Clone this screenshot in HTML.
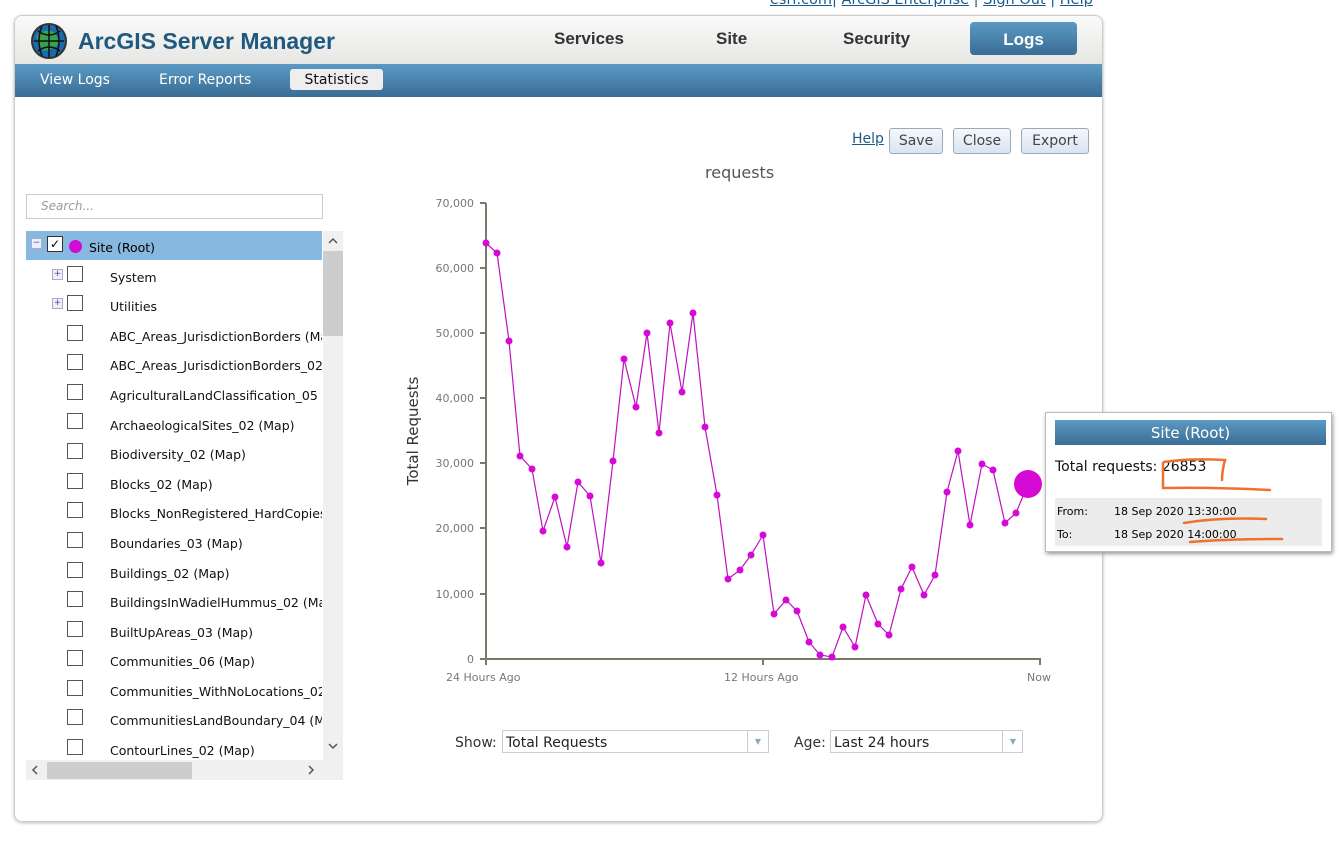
<!DOCTYPE html>
<html><head><meta charset="utf-8"><style>
body{margin:0;width:1342px;height:847px;background:#fff;font-family:"DejaVu Sans","Liberation Sans",sans-serif;position:relative;overflow:hidden}
.abs{position:absolute}
.toplinks{position:absolute;left:770px;top:-8px;font-size:14.5px;color:#1a5a8a}
.toplinks a{color:#1a5a8a;text-decoration:underline}
.frame{position:absolute;left:14px;top:15px;width:1087px;height:805px;border:1px solid #ccc;border-radius:8px;box-shadow:0 1px 3px #bbb;overflow:hidden}
.hdr{height:48px;background:linear-gradient(#fafafa,#e6e6e3)}
.sub{height:33px;background:linear-gradient(#5b9ac4,#3a6d94)}
.nav{position:absolute;top:29px;font-weight:bold;font-size:17px;color:#333;font-family:"Liberation Sans",sans-serif}
.btn{position:absolute;top:128px;height:24px;border:1px solid #9ab;border-radius:3px;background:linear-gradient(#f4f8fc,#d7e5f2);font-size:14px;color:#444;text-align:center;line-height:24px}
.row{position:absolute;left:110px;font-size:12.5px;color:#111;white-space:nowrap}
.cb{position:absolute;left:67px;width:14px;height:14px;border:1px solid #555;background:#fff}
.yl{position:absolute;font-size:11px;color:#777;text-align:right;width:50px;left:424px}
</style></head><body>
<div class="toplinks"><a>esri.com</a>| <a>ArcGIS Enterprise</a> | <a>Sign Out</a> | <a>Help</a></div>
<div class="frame">
<div class="hdr"></div><div class="sub"></div>
</div>
<svg class="abs" style="left:30px;top:22px" width="38" height="38" viewBox="0 0 38 38"><circle cx="19" cy="19" r="17" fill="#1a6ab0" stroke="#333" stroke-width="2"/><path d="M6 14 Q14 6 24 10 L30 20 Q22 30 12 28Z" fill="#3aa04a"/><path d="M4 19h30M19 3v32M8 9q11 8 22 0M8 29q11-8 22 0M12 4q-6 15 0 30M26 4q6 15 0 30" stroke="#111" stroke-width="1.5" fill="none"/></svg>
<div class="abs" style="left:78px;top:28px;font-size:23px;font-weight:bold;color:#1f5a7e;font-family:'Liberation Sans',sans-serif">ArcGIS Server Manager</div>
<div class="nav" style="left:554px">Services</div>
<div class="nav" style="left:716px">Site</div>
<div class="nav" style="left:843px">Security</div>
<div class="abs" style="left:970px;top:22px;width:107px;height:33px;border-radius:4px;background:linear-gradient(#5b9ac4,#3a6d94);color:#fff;font-weight:bold;font-size:17px;text-align:center;line-height:35px;font-family:'Liberation Sans',sans-serif">Logs</div>
<div class="abs" style="left:40px;top:72px;color:#fff;font-size:14px">View Logs</div>
<div class="abs" style="left:159px;top:72px;color:#fff;font-size:14px">Error Reports</div>
<div class="abs" style="left:290px;top:69px;width:93px;height:21px;background:#eee;border-radius:3px;font-size:14px;text-align:center;line-height:23px;color:#111">Statistics</div>
<div class="abs" style="left:852px;top:131px;font-size:14px;color:#1a5a8a;text-decoration:underline">Help</div>
<div class="btn" style="left:889px;width:52px">Save</div>
<div class="btn" style="left:953px;width:56px">Close</div>
<div class="btn" style="left:1021px;width:66px">Export</div>
<div class="abs" style="left:26px;top:194px;height:23px;border:1px solid #ccc;font-size:12px;color:#999;font-style:italic;line-height:23px;padding-left:14px;width:281px">Search...</div>
<div class="abs" style="left:26px;top:231px;width:317px;height:549px;background:#fff;overflow:hidden">
<div class="abs" style="left:0;top:0;width:296px;height:29px;background:#86b8e0"></div>
<div class="abs" style="left:297px;top:0;width:20px;height:549px;background:#f0f0f0"></div>
<div class="abs" style="left:297px;top:20px;width:20px;height:85px;background:#cdcdcd"></div>
<div class="abs" style="left:0;top:529px;width:297px;height:20px;background:#f0f0f0"></div>
<div class="abs" style="left:21px;top:531px;width:145px;height:17px;background:#cdcdcd"></div>
<svg class="abs" style="left:301px;top:5px" width="12" height="10"><path d="M2 7l4-4 4 4" stroke="#555" stroke-width="1.5" fill="none"/></svg>
<svg class="abs" style="left:301px;top:510px" width="12" height="10"><path d="M2 3l4 4 4-4" stroke="#555" stroke-width="1.5" fill="none"/></svg>
<svg class="abs" style="left:4px;top:533px" width="10" height="12"><path d="M7 2l-4 4 4 4" stroke="#555" stroke-width="1.5" fill="none"/></svg>
<svg class="abs" style="left:280px;top:533px" width="10" height="12"><path d="M3 2l4 4-4 4" stroke="#555" stroke-width="1.5" fill="none"/></svg>
</div>
<div class="abs" style="left:31px;top:238px;width:9px;height:9px;border:1px solid #aac;background:#eef;font-size:9px;line-height:8px;text-align:center;color:#557">−</div>
<div class="abs" style="left:47px;top:236px;width:14px;height:14px;border:1px solid #333;background:#fff;font-size:12px;line-height:14px;text-align:center">✓</div>
<div class="abs" style="left:69px;top:240px;width:13px;height:13px;border-radius:50%;background:#d60ad6"></div>
<div class="abs" style="left:89px;top:240px;font-size:12.5px">Site (Root)</div>
<div class="abs" style="left:52px;top:269px;width:9px;height:9px;border:1px solid #aac;background:#eef;font-size:9px;line-height:9px;text-align:center;color:#557">+</div>
<div class="abs" style="left:52px;top:298px;width:9px;height:9px;border:1px solid #aac;background:#eef;font-size:9px;line-height:9px;text-align:center;color:#557">+</div>
<div class="cb" style="top:266px"></div><div class="row" style="top:270px">System</div>
<div class="cb" style="top:295px"></div><div class="row" style="top:299px">Utilities</div>
<div class="cb" style="top:325px"></div><div class="row" style="top:329px;width:212px;overflow:hidden">ABC_Areas_JurisdictionBorders (Map)</div>
<div class="cb" style="top:354px"></div><div class="row" style="top:358px;width:212px;overflow:hidden">ABC_Areas_JurisdictionBorders_02</div>
<div class="cb" style="top:384px"></div><div class="row" style="top:388px;width:212px;overflow:hidden">AgriculturalLandClassification_05</div>
<div class="cb" style="top:413px"></div><div class="row" style="top:418px">ArchaeologicalSites_02 (Map)</div>
<div class="cb" style="top:443px"></div><div class="row" style="top:447px">Biodiversity_02 (Map)</div>
<div class="cb" style="top:473px"></div><div class="row" style="top:477px">Blocks_02 (Map)</div>
<div class="cb" style="top:502px"></div><div class="row" style="top:506px;width:212px;overflow:hidden">Blocks_NonRegistered_HardCopies</div>
<div class="cb" style="top:532px"></div><div class="row" style="top:536px">Boundaries_03 (Map)</div>
<div class="cb" style="top:562px"></div><div class="row" style="top:566px">Buildings_02 (Map)</div>
<div class="cb" style="top:591px"></div><div class="row" style="top:595px;width:212px;overflow:hidden">BuildingsInWadielHummus_02 (Map)</div>
<div class="cb" style="top:621px"></div><div class="row" style="top:625px">BuiltUpAreas_03 (Map)</div>
<div class="cb" style="top:650px"></div><div class="row" style="top:654px">Communities_06 (Map)</div>
<div class="cb" style="top:680px"></div><div class="row" style="top:684px;width:212px;overflow:hidden">Communities_WithNoLocations_02</div>
<div class="cb" style="top:709px"></div><div class="row" style="top:713px;width:212px;overflow:hidden">CommunitiesLandBoundary_04 (Map)</div>
<div class="cb" style="top:739px"></div><div class="row" style="top:743px">ContourLines_02 (Map)</div>

<div class="abs" style="left:705px;top:163px;font-size:16px;color:#555">requests</div>
<div class="abs" style="left:353px;top:422px;font-size:15px;color:#333;transform:rotate(-90deg);transform-origin:center;width:120px;text-align:center">Total Requests</div>
<div class="yl" style="top:197px">70,000</div>
<div class="yl" style="top:262px">60,000</div>
<div class="yl" style="top:327px">50,000</div>
<div class="yl" style="top:392px">40,000</div>
<div class="yl" style="top:457px">30,000</div>
<div class="yl" style="top:522px">20,000</div>
<div class="yl" style="top:588px">10,000</div>
<div class="yl" style="top:653px">0</div>
<div class="abs" style="left:446px;top:671px;font-size:11px;color:#777">24 Hours Ago</div>
<div class="abs" style="left:724px;top:671px;font-size:11px;color:#777">12 Hours Ago</div>
<div class="abs" style="left:1027px;top:671px;font-size:11px;color:#777">Now</div>
<svg class="abs" style="left:0;top:0" width="1342" height="847">
<g stroke="#7a7a6a" stroke-width="2" fill="none"><path d="M486 203V665M480 659H1041M763 659v6M1040 659v6M480 203h6M480 268h6M480 333h6M480 398h6M480 463h6M480 528h6M480 594h6"/></g>
<polyline fill="none" stroke="#c010c0" stroke-width="1.2" points="486,243 497,253 509,341 520,456 532,469 543,531 555,497 567,547 578,482 590,496 601,563 613,461 624,359 636,407 647,333 659,433 670,323 682,392 693,313 705,427 717,495 728,579 740,570 751,555 763,535 774,614 786,600 797,611 809,642 820,655 832,657 843,627 855,647 866,595 878,624 889,635 901,589 912,567 924,595 935,575 947,492 958,451 970,525 982,464 993,470 1005,523 1016,513 1028,484"/>
<g fill="#d60ad6"><circle cx="486" cy="243" r="3.5"/><circle cx="497" cy="253" r="3.5"/><circle cx="509" cy="341" r="3.5"/><circle cx="520" cy="456" r="3.5"/><circle cx="532" cy="469" r="3.5"/><circle cx="543" cy="531" r="3.5"/><circle cx="555" cy="497" r="3.5"/><circle cx="567" cy="547" r="3.5"/><circle cx="578" cy="482" r="3.5"/><circle cx="590" cy="496" r="3.5"/><circle cx="601" cy="563" r="3.5"/><circle cx="613" cy="461" r="3.5"/><circle cx="624" cy="359" r="3.5"/><circle cx="636" cy="407" r="3.5"/><circle cx="647" cy="333" r="3.5"/><circle cx="659" cy="433" r="3.5"/><circle cx="670" cy="323" r="3.5"/><circle cx="682" cy="392" r="3.5"/><circle cx="693" cy="313" r="3.5"/><circle cx="705" cy="427" r="3.5"/><circle cx="717" cy="495" r="3.5"/><circle cx="728" cy="579" r="3.5"/><circle cx="740" cy="570" r="3.5"/><circle cx="751" cy="555" r="3.5"/><circle cx="763" cy="535" r="3.5"/><circle cx="774" cy="614" r="3.5"/><circle cx="786" cy="600" r="3.5"/><circle cx="797" cy="611" r="3.5"/><circle cx="809" cy="642" r="3.5"/><circle cx="820" cy="655" r="3.5"/><circle cx="832" cy="657" r="3.5"/><circle cx="843" cy="627" r="3.5"/><circle cx="855" cy="647" r="3.5"/><circle cx="866" cy="595" r="3.5"/><circle cx="878" cy="624" r="3.5"/><circle cx="889" cy="635" r="3.5"/><circle cx="901" cy="589" r="3.5"/><circle cx="912" cy="567" r="3.5"/><circle cx="924" cy="595" r="3.5"/><circle cx="935" cy="575" r="3.5"/><circle cx="947" cy="492" r="3.5"/><circle cx="958" cy="451" r="3.5"/><circle cx="970" cy="525" r="3.5"/><circle cx="982" cy="464" r="3.5"/><circle cx="993" cy="470" r="3.5"/><circle cx="1005" cy="523" r="3.5"/><circle cx="1016" cy="513" r="3.5"/><circle cx="1028" cy="484" r="14"/></g>
</svg>
<div class="abs" style="left:1045px;top:412px;width:285px;height:138px;background:#fff;border:1px solid #bbb;box-shadow:1px 2px 4px #999"></div>
<div class="abs" style="left:1055px;top:420px;width:271px;height:25px;background:linear-gradient(#5b9ac4,#3a6d94);color:#fff;font-size:15px;text-align:center;line-height:27px">Site (Root)</div>
<div class="abs" style="left:1055px;top:459px;font-size:14px;color:#111">Total requests: 26853</div>
<div class="abs" style="left:1055px;top:498px;width:267px;height:48px;background:#ececec"></div>
<div class="abs" style="left:1057px;top:505px;font-size:11px">From:</div><div class="abs" style="left:1114px;top:505px;font-size:11px">18 Sep 2020 13:30:00</div>
<div class="abs" style="left:1057px;top:528px;font-size:11px">To:</div><div class="abs" style="left:1114px;top:528px;font-size:11px">18 Sep 2020 14:00:00</div>
<svg class="abs" style="left:1150px;top:455px" width="140" height="90" fill="none" stroke="#f07030" stroke-width="2.5" stroke-linecap="round"><path d="M14 7Q40 3 75 5 72 16 72 25M13 8V33Q60 32 120 35M34 68Q70 62 116 64M40 87Q80 84 132 84"/></svg>
<div class="abs" style="left:455px;top:735px;font-size:14px;color:#333">Show:</div>
<div class="abs" style="left:502px;top:730px;height:23px;border:1px solid #ccc;font-size:14px;line-height:24px;padding-left:3px;box-sizing:border-box;width:267px;color:#222">Total Requests</div>
<div class="abs" style="left:747px;top:731px;width:20px;height:22px;border-left:1px solid #ccc;color:#8ab;font-size:8px;text-align:center;line-height:22px">▼</div>
<div class="abs" style="left:794px;top:735px;font-size:14px;color:#333">Age:</div>
<div class="abs" style="left:830px;top:730px;width:193px;height:23px;border:1px solid #ccc;font-size:14px;line-height:24px;padding-left:3px;box-sizing:border-box;color:#222">Last 24 hours</div>
<div class="abs" style="left:1002px;top:731px;width:20px;height:22px;border-left:1px solid #ccc;color:#8ab;font-size:8px;text-align:center;line-height:22px">▼</div>
</body></html>
